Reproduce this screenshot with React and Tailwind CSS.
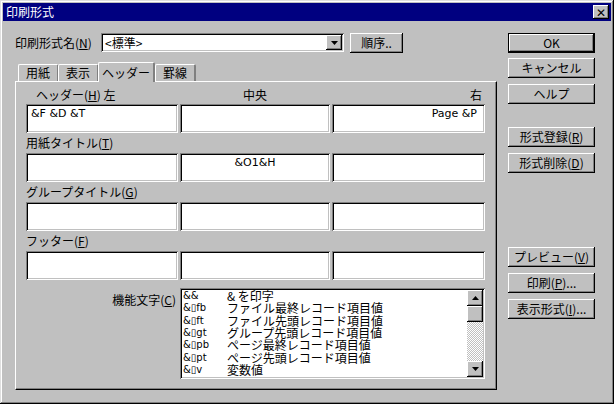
const F = { fontFamily: '"Noto Sans CJK JP", "Noto Sans", sans-serif' };
const raised = "bg-[#c0c0c0] shadow-[inset_-1px_-1px_0_#000,inset_1px_1px_0_#fff,inset_-2px_-2px_0_#808080]";
const sunken = "bg-white shadow-[inset_1px_1px_0_#808080,inset_-1px_-1px_0_#fff,inset_2px_2px_0_#000,inset_-2px_-2px_0_#c0c0c0]";

function Btn({ children, def, className = "" }) {
  return (
    <div className={`${def ? "border border-black" : ""} ${className}`}>
      <div className={`${raised} flex items-center justify-center text-[12px] leading-none ${def ? "h-[18px]" : "h-[20px]"}`}>{children}</div>
    </div>
  );
}
const U = ({ c }) => <span className="underline">{c}</span>;

function Field({ children, align = "left" }) {
  return (
    <div className={`${sunken} h-[29px] px-[5px] pt-[4px] text-[11px] leading-none ${align === "right" ? "text-right pr-[8px]" : align === "center" ? "text-center" : ""}`} style={{ fontFamily: '"DejaVu Sans", sans-serif' }}>
      {children}
    </div>
  );
}
function Row({ a = "", b = "", c = "" }) {
  return (
    <div className="grid grid-cols-[152px_150px_153px] gap-[2px]">
      <Field>{a}</Field><Field align="center">{b}</Field><Field align="right">{c}</Field>
    </div>
  );
}

const items = [
  ["&&", "& を印字"], ["&\u25AFfb", "ファイル最終レコード項目値"], ["&\u25AFft", "ファイル先頭レコード項目値"],
  ["&\u25AFgt", "グループ先頭レコード項目値"], ["&\u25AFpb", "ページ最終レコード項目値"], ["&\u25AFpt", "ページ先頭レコード項目値"],
  ["&\u25AFv", "変数値"], ["&\u25AFw", "ワード"],
];

export default function App() {
  return (
    <div className="w-[614px] h-[404px] bg-[#c0c0c0] text-black shadow-[inset_-1px_-1px_0_#000,inset_1px_1px_0_#dfdfdf,inset_-2px_-2px_0_#808080,inset_2px_2px_0_#fff] p-[3px] flex flex-col" style={F}>
      <div className="h-[18px] bg-[#000080] flex items-center justify-between pl-[3px] pr-[2px]">
        <span className="text-white text-[12px] leading-none">印刷形式</span>
        <div className={`${raised} w-[16px] h-[14px] flex items-center justify-center text-[12px] leading-none`}>✕</div>
      </div>
      <div className="flex flex-1">
        <div className="w-[500px] flex flex-col pl-[12px]">
          <div className="flex items-center mt-[12px] h-[19px] text-[12px]">
            <span className="w-[86px]">印刷形式名(<U c="N" />)</span>
            <div className={`${sunken} w-[243px] h-[19px] flex items-center justify-between pl-[4px] pr-[2px]`}>
              <span>&lt;標準&gt;</span>
              <div className={`${raised} w-[16px] h-[15px] flex items-center justify-center`}>
                <svg width="7" height="4"><path d="M0 0h7L3.5 4z" /></svg>
              </div>
            </div>
            <Btn className="ml-[6px] w-[53px]"><span className="text-[12px]">順序..</span></Btn>
          </div>
          <div className="flex items-end h-[21px] mt-[8px] pl-[3px] text-[12px] relative z-10">
            {["用紙", "表示"].map((t) => (
              <div key={t} className="w-[41px] h-[17px] border-t border-l border-white border-r-2 border-r-[#808080] rounded-t-[2px] flex items-center justify-center -mr-[1px]">{t}</div>
            ))}
            <div className="w-[57px] h-[20px] border-t border-l border-white border-r-2 border-r-[#808080] rounded-t-[2px] flex items-start pt-[1px] justify-center bg-[#c0c0c0] -mb-[1px]">ヘッダー</div>
            <div className="w-[41px] h-[17px] border-t border-l border-white border-r-2 border-r-[#808080] rounded-t-[2px] flex items-center justify-center">罫線</div>
          </div>
          <div className="w-[482px] h-[309px] border-t border-l border-white border-r border-b border-r-black border-b-black shadow-[inset_-1px_-1px_0_#808080] px-[10px] pt-[4px] text-[12px]">
            <div className="grid grid-cols-[152px_150px_153px] gap-[2px] h-[18px] items-center">
              <span className="pl-[10px]">ヘッダー(<U c="H" />) 左</span>
              <span className="text-center">中央</span>
              <span className="text-right pr-[3px]">右</span>
            </div>
            <Row a="&F &D &T" c="Page &P" />
            <div className="h-[20px] flex items-center">用紙タイトル(<U c="T" />)</div>
            <Row b="&O1&H" />
            <div className="h-[20px] flex items-center">グループタイトル(<U c="G" />)</div>
            <Row />
            <div className="h-[20px] flex items-center">フッター(<U c="F" />)</div>
            <Row />
            <div className="flex mt-[8px]">
              <div className="w-[154px] text-right pr-[4px] pt-[3px]">機能文字(<U c="C" />)</div>
              <div className={`${sunken} w-[305px] h-[91px] flex p-[2px]`}>
                <div className="flex-1 overflow-hidden pl-[1px] text-[12px]">
                  {items.map(([k, v]) => (
                    <div key={k} className="flex h-[12.3px] items-center leading-none"><span className="w-[44px] text-[10px]" style={{ fontFamily: '"DejaVu Sans", sans-serif' }}>{k}</span><span>{v}</span></div>
                  ))}
                </div>
                <div className="w-[16px] flex flex-col bg-[repeating-conic-gradient(#fff_0_25%,#c0c0c0_0_50%)] bg-[length:2px_2px]">
                  <div className={`${raised} h-[16px] flex items-center justify-center`}><svg width="7" height="4"><path d="M3.5 0L7 4H0z" /></svg></div>
                  <div className={`${raised} h-[16px]`}></div>
                  <div className="flex-1"></div>
                  <div className={`${raised} h-[16px] flex items-center justify-center`}><svg width="7" height="4"><path d="M0 0h7L3.5 4z" /></svg></div>
                </div>
              </div>
            </div>
          </div>
        </div>
        <div className="flex flex-col w-[87px] ml-[5px] pt-[12px]">
          <Btn def>OK</Btn>
          <Btn className="mt-[5px]">キャンセル</Btn>
          <Btn className="mt-[6px]">ヘルプ</Btn>
          <Btn className="mt-[23px]">形式登録(<U c="R" />)</Btn>
          <Btn className="mt-[6px]">形式削除(<U c="D" />)</Btn>
          <Btn className="mt-[74px]">プレビュー(<U c="V" />)</Btn>
          <Btn className="mt-[6px]">印刷(<U c="P" />)...</Btn>
          <Btn className="mt-[6px]">表示形式(<U c="I" />)...</Btn>
        </div>
      </div>
    </div>
  );
}
